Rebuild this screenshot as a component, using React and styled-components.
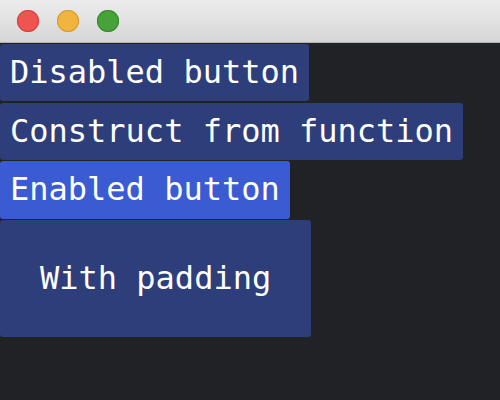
import React from "react";
import styled, { createGlobalStyle } from "styled-components";

const Global = createGlobalStyle`
  html, body {
    margin: 0;
    padding: 0;
    background: #212226;
  }
  #root {
    min-height: 400px;
  }
`;

const Window = styled.div`
  width: 500px;
  height: 400px;
  background: #212226;
  display: flex;
  flex-direction: column;
  overflow: hidden;
`;

const TitleBar = styled.div`
  height: 42px;
  flex-shrink: 0;
  display: flex;
  align-items: center;
  gap: 18px;
  padding-left: 17px;
  background: linear-gradient(#ececec, #d6d6d6);
  border-bottom: 1px solid #b3b3b3;
`;

const Light = styled.span`
  width: 22px;
  height: 22px;
  border-radius: 50%;
  background: ${(p) => p.color};
  box-shadow: inset 0 0 0 1px ${(p) => p.edge};
`;

const Content = styled.div`
  display: flex;
  flex-direction: column;
  align-items: flex-start;
  gap: 1.33px;
  padding-top: 1px;
`;

const Button = styled.button`
  border: none;
  border-radius: 3px;
  margin: 0;
  padding: ${(p) => (p.$padded ? "40px" : "10px")};
  background: ${(p) => (p.$enabled ? "#3a5bd2" : "#2d3e7b")};
  color: #ffffff;
  font-family: "DejaVu Sans Mono", monospace;
  font-size: 32px;
  line-height: 37.33px;
  text-align: left;
  cursor: ${(p) => (p.$enabled ? "pointer" : "default")};
`;

export default function App() {
  return (
    <>
      <Global />
      <Window>
        <TitleBar>
          <Light color="#ee5550" edge="#d6433e" />
          <Light color="#f1b53f" edge="#d59c2e" />
          <Light color="#47a23a" edge="#3a8a2e" />
        </TitleBar>
        <Content>
          <Button>Disabled button</Button>
          <Button>Construct from function</Button>
          <Button $enabled>Enabled button</Button>
          <Button $padded>With padding</Button>
        </Content>
      </Window>
    </>
  );
}
